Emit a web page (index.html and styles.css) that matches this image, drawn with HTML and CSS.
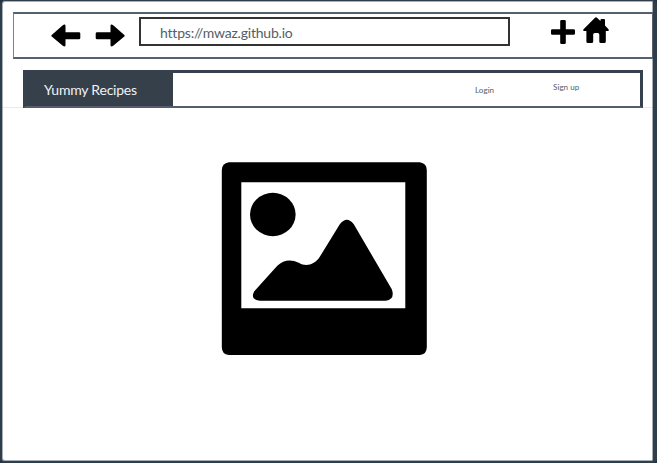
FILE: index.html
```html
<!DOCTYPE html>
<html lang="en">
<head>
<meta charset="utf-8">
<title>Yummy Recipes</title>
<link rel="stylesheet" href="styles.css">
</head>
<body>
<div class="window">
  <header class="toolbar">
    <svg class="arrow back" viewBox="0 0 30 24"><path d="M.7 11 11.500 1.500Q14.500-.5 14.500 2V8.200H28Q29.300 8.200 29.300 9.500V14Q29.300 15.300 28 15.300H14.500V21Q14.500 23.500 11.500 21.500L.7 12.600Q-.1 11.800 .7 11Z"/></svg>
    <svg class="arrow forward" viewBox="0 0 30 24"><path d="M29.300 11 18.500 1.500Q15.500-.5 15.500 2V8.200H2Q.7 8.200 .7 9.500V14Q.7 15.300 2 15.300H15.500V21Q15.500 23.500 18.500 21.500L29.300 12.600Q30.100 11.800 29.300 11Z"/></svg>
    <div class="address">https://mwaz.github.io</div>
    <svg class="plus" viewBox="0 0 24 24"><path d="M10.500 0h3q1.300 0 1.300 1.300v7.900h7.900q1.300 0 1.300 1.300v3q0 1.300-1.300 1.300h-7.900v7.900q0 1.300-1.300 1.300h-3q-1.300 0-1.300-1.300v-7.900H1.300q-1.300 0-1.300-1.300v-3q0-1.300 1.300-1.300h7.900V1.300q0-1.300 1.300-1.300Z"/></svg>
    <svg class="home" viewBox="0 0 26 26"><path d="M12 .7Q13 0 14 .7L17.500 4V3Q17.500 2 18.500 2H21Q22 2 22 3V8.500L25.500 12.200Q26.300 14 24.500 14H22.800V24.500Q22.800 26 21.300 26H17.800Q16.300 26 16.300 24.500V17.500Q16.300 16 14.800 16H11.700Q10.200 16 10.200 17.500V24.500Q10.200 26 8.700 26H4.900Q3.400 26 3.400 24.500V14H1.500Q-.3 14 .5 12.200Z"/></svg>
  </header>
  <nav class="navbar">
    <div class="brand">Yummy Recipes</div>
    <a class="login">Login</a>
    <a class="signup">Sign up</a>
  </nav>
  <div class="rule"></div>
  <main class="content">
    <svg class="photo" viewBox="0 0 206 193"><g transform="translate(.8 .3)"><path fill-rule="evenodd" d="M7 0H198Q205 1 205 8V185Q205 192 198 192.700H7Q0 192 0 185V8Q0 1 7 0ZM19.500 20V146H183.500V20Z"/><ellipse cx="51" cy="52.200" rx="22.800" ry="21.700"/><path d="M32.500 129 55.500 103.500Q65 94.500 77 100.500C84 105 93 102.500 98 94.500L118 62Q125 53 132 62L170 127Q173.500 137 164 138.500H38Q28 137 32.500 129Z"/></g></svg>
  </main>
</div>
</body>
</html>
```

FILE: styles.css
```css
* { box-sizing: border-box; }
body {
  margin: 0;
  background: #26323f;
  font-family: Lato, "Liberation Sans", sans-serif;
  color: #535e69;
}
.window {
  height: 463px;
  padding: 11px 0 0 11px;
  background: #fff;
  border: solid #303d4b;
  border-width: 1px 4px 2px 2px;
  border-radius: 5px;
  box-shadow: inset 0 0 0 1px #a5adb5;
}
.toolbar {
  display: flex;
  align-items: flex-start;
  height: 47px;
  padding-left: 37px;
  border: 1px solid #55616d;
  border-top-width: 2px;
  border-bottom-width: 2px;
  border-left-color: #77828d;
}
.arrow { width: 30px; height: 24px; margin-top: 9.500px; }
.forward { margin-left: 14px; }
.address {
  width: 371px;
  height: 29px;
  margin: 3px 41px 0 14px;
  padding-left: 19px;
  border: 2px solid #333;
  font-size: 14px;
  letter-spacing: -.2px;
  line-height: 27px;
}
.plus { width: 24px; height: 24px; margin-top: 6px; }
.home { width: 26px; height: 26px; margin: 3px 0 0 8px; }
.navbar {
  display: flex;
  width: 620px;
  height: 38px;
  margin: 11px 0 0 10px;
  border: 3px solid #36414d;
  border-bottom: 2px solid #56606c;
  font-size: 8.100px;
}
.brand {
  width: 147px;
  padding-left: 18px;
  background: #36404b;
  color: #f1f2f3;
  font-size: 14px;
  letter-spacing: -.22px;
  line-height: 34px;
}
.login { margin: 12px 0 0 302px; }
.signup { margin: 9px 0 0 59px; }
.rule { height: 1px; margin: -1px 0 0 -11px; background: rgba(70, 80, 95, .12); }
.content { display: flex; justify-content: center; padding: 54px 19px 0 0; }
.photo { width: 206px; height: 193px; }
```
